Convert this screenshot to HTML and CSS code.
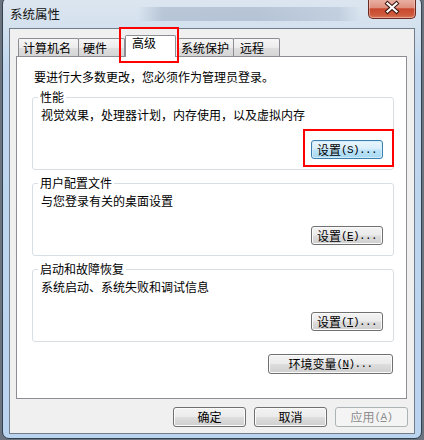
FILE: index.html
```html
<!DOCTYPE html>
<html lang="zh-CN">
<head>
<meta charset="utf-8">
<title>系统属性</title>
<link rel="stylesheet" href="styles.css">
</head>
<body>
<div class="window">
  <div class="titlebar">
    <span class="title">系统属性</span>
    <div class="close">
      <svg width="48" height="20" viewBox="0 0 48 20">
        <path d="M19.5 5.5 L28.5 13.5 M28.5 5.5 L19.5 13.5" stroke="#3a1610" stroke-width="4.2" stroke-linecap="square" fill="none"/>
        <path d="M19.5 5.5 L28.5 13.5 M28.5 5.5 L19.5 13.5" stroke="#ffffff" stroke-width="2.2" stroke-linecap="square" fill="none"/>
      </svg>
    </div>
  </div>
  <div class="client">
    <div class="tabs">
      <div class="tab t1">计算机名</div>
      <div class="tab t2">硬件</div>
      <div class="tab t3 active">高级</div>
      <div class="tab t4">系统保护</div>
      <div class="tab t5">远程</div>
    </div>
    <div class="panel">
      <p class="intro">要进行大多数更改，您必须作为管理员登录。</p>
      <div class="groups">
        <fieldset class="group">
          <legend>性能</legend>
          <p class="desc">视觉效果，处理器计划，内存使用，以及虚拟内存</p>
          <div class="actions"><button class="btn small focus">设置<span class="lat">(S)...</span></button></div>
        </fieldset>
        <fieldset class="group">
          <legend>用户配置文件</legend>
          <p class="desc">与您登录有关的桌面设置</p>
          <div class="actions"><button class="btn small">设置<span class="lat">(<u>E</u>)...</span></button></div>
        </fieldset>
        <fieldset class="group">
          <legend>启动和故障恢复</legend>
          <p class="desc">系统启动、系统失败和调试信息</p>
          <div class="actions"><button class="btn small">设置<span class="lat">(<u>T</u>)...</span></button></div>
        </fieldset>
      </div>
      <div class="env-row"><button class="btn env">环境变量<span class="lat">(<u>N</u>)...</span></button></div>
    </div>
    <div class="footer">
      <button class="btn wide">确定</button>
      <button class="btn wide">取消</button>
      <button class="btn wide disabled">应用<span class="lat">(<u>A</u>)</span></button>
    </div>
  </div>
</div>
<div class="mark mark-tab"></div>
<div class="mark mark-btn"></div>
</body>
</html>
```

FILE: styles.css
```css
html, body {
  margin: 0;
  padding: 0;
}
body {
  width: 424px;
  height: 440px;
  overflow: hidden;
  background: #6b747e;
  font-family: "Noto Sans CJK SC", "Microsoft YaHei", sans-serif;
  font-size: 12px;
  color: #000;
}
.window {
  box-sizing: border-box;
  width: 420px;
  height: 442px;
  margin: -3px 0 0 2px;
  border: 1px solid #34414f;
  border-radius: 7px;
  background: linear-gradient(180deg, #dce6f0 0, #d4e1ee 28px, #c0d6ee 70px, #bad3ef 100%);
  display: flex;
  flex-direction: column;
  overflow: hidden;
}
.titlebar {
  height: 30px;
  flex: none;
  display: flex;
  align-items: flex-start;
  padding-left: 7px;
  background:
    linear-gradient(90deg, transparent 0, transparent 135px, rgba(110,130,160,.30) 160px, rgba(95,115,150,.28) 250px, rgba(115,135,165,.22) 335px, transparent 358px) 0 9px / 100% 14px no-repeat;
}
.title {
  line-height: 16px;
  padding-top: 8px;
  font-size: 12.5px;
  color: #111;
}
.close {
  margin: 1px 5px 0 auto;
  width: 48px;
  height: 20px;
  box-sizing: border-box;
  border: 1px solid #6a2a22;
  border-top: none;
  border-radius: 0 0 5px 5px;
  background: linear-gradient(180deg, #eab3a6 0%, #df907f 45%, #c9482f 52%, #cf5b3d 85%, #d9785a 100%);
  box-shadow: inset 0 0 0 1px rgba(255,220,210,.45);
  overflow: hidden;
}
.close svg {
  display: block;
  margin: -1px 0 0 -1px;
}
.client {
  box-sizing: border-box;
  height: 406px;
  margin: 0 6px;
  border: 1px solid #717d8a;
  background: #f0f0f0;
  display: flex;
  flex-direction: column;
}
.tabs {
  margin-top: 6px;
  height: 21px;
  padding-left: 8px;
  display: flex;
  align-items: flex-end;
}
.tab {
  box-sizing: border-box;
  height: 18px;
  line-height: 17px;
  border: 1px solid #8c8e94;
  border-bottom: none;
  border-radius: 2px 2px 0 0;
  background: linear-gradient(180deg, #f6f6f6 0%, #ececec 50%, #dedede 55%, #d5d5d5 100%);
  white-space: nowrap;
}
.t1 { width: 61px; padding-left: 4px; }
.t2 { width: 47px; padding-left: 4px; margin-left: -1px; }
.t3 { width: 51px; padding-left: 6px; }
.t4 { width: 56px; padding-left: 2px; margin-left: 2px; }
.t5 { width: 47px; padding-left: 6px; margin-left: -1px; }
.tab.active {
  height: 22px;
  line-height: 14px;
  padding-bottom: 7px;
  margin-bottom: -1px;
  background: #fff;
  position: relative;
  z-index: 1;
}
.panel {
  box-sizing: border-box;
  height: 343px;
  margin: 0 7px 0 6px;
  border: 1px solid #8c8e94;
  background: #fff;
}
.intro {
  margin: 13px 0 0 17px;
  line-height: 14px;
}
.groups {
  margin: 6px 12px 0 15px;
  display: flex;
  flex-direction: column;
  gap: 6px;
}
.group {
  margin: 0;
  min-width: 0;
  padding: 0 10px 10px 8px;
  border: 1px solid #d5dfe5;
  border-radius: 3px;
}
.group legend {
  margin-left: -3px;
  padding: 0 2px;
  line-height: 14px;
}
.desc {
  margin: 4px 0 0 0;
  line-height: 14px;
}
.actions {
  margin-top: 18px;
  display: flex;
  justify-content: flex-end;
}
.btn {
  box-sizing: border-box;
  margin: 0;
  padding: 0;
  font: inherit;
  color: #000;
  line-height: 14px;
  display: flex;
  align-items: center;
  justify-content: center;
  white-space: nowrap;
  border: 1px solid #707070;
  border-radius: 3px;
  background: linear-gradient(180deg, #f3f3f3 0%, #ebebeb 48%, #dddddd 52%, #cfcfcf 100%);
  box-shadow: inset 0 0 0 1px #fbfbfb;
}
.btn.small {
  width: 72px;
  height: 19px;
}
.btn.focus {
  border-color: #3c7fb1;
  background: linear-gradient(180deg, #e9f5fc 0%, #d8eefb 48%, #bde4fa 52%, #a7d8f3 100%);
  box-shadow: inset 0 0 0 1px #d2ecfa;
}
.btn.env {
  width: 125px;
  height: 20px;
}
.btn.wide {
  width: 73px;
  height: 20px;
}
.btn.disabled {
  color: #8d8d8d;
  border-color: #adb2b5;
  background: #f4f4f4;
  box-shadow: none;
}
.lat {
  font-family: "Liberation Mono", monospace;
  font-size: 11px;
  letter-spacing: -0.6px;
}
.env-row {
  margin: 12px 13px 0 0;
  display: flex;
  justify-content: flex-end;
}
.footer {
  margin-top: 8px;
  padding-right: 6px;
  display: flex;
  justify-content: flex-end;
  gap: 8px;
}
.mark {
  position: absolute;
  box-sizing: border-box;
  border: 2px solid #f00;
  z-index: 5;
}
.mark-tab {
  left: 119px;
  top: 27px;
  width: 60px;
  height: 36px;
}
.mark-btn {
  left: 303px;
  top: 129px;
  width: 91px;
  height: 38px;
}
```
